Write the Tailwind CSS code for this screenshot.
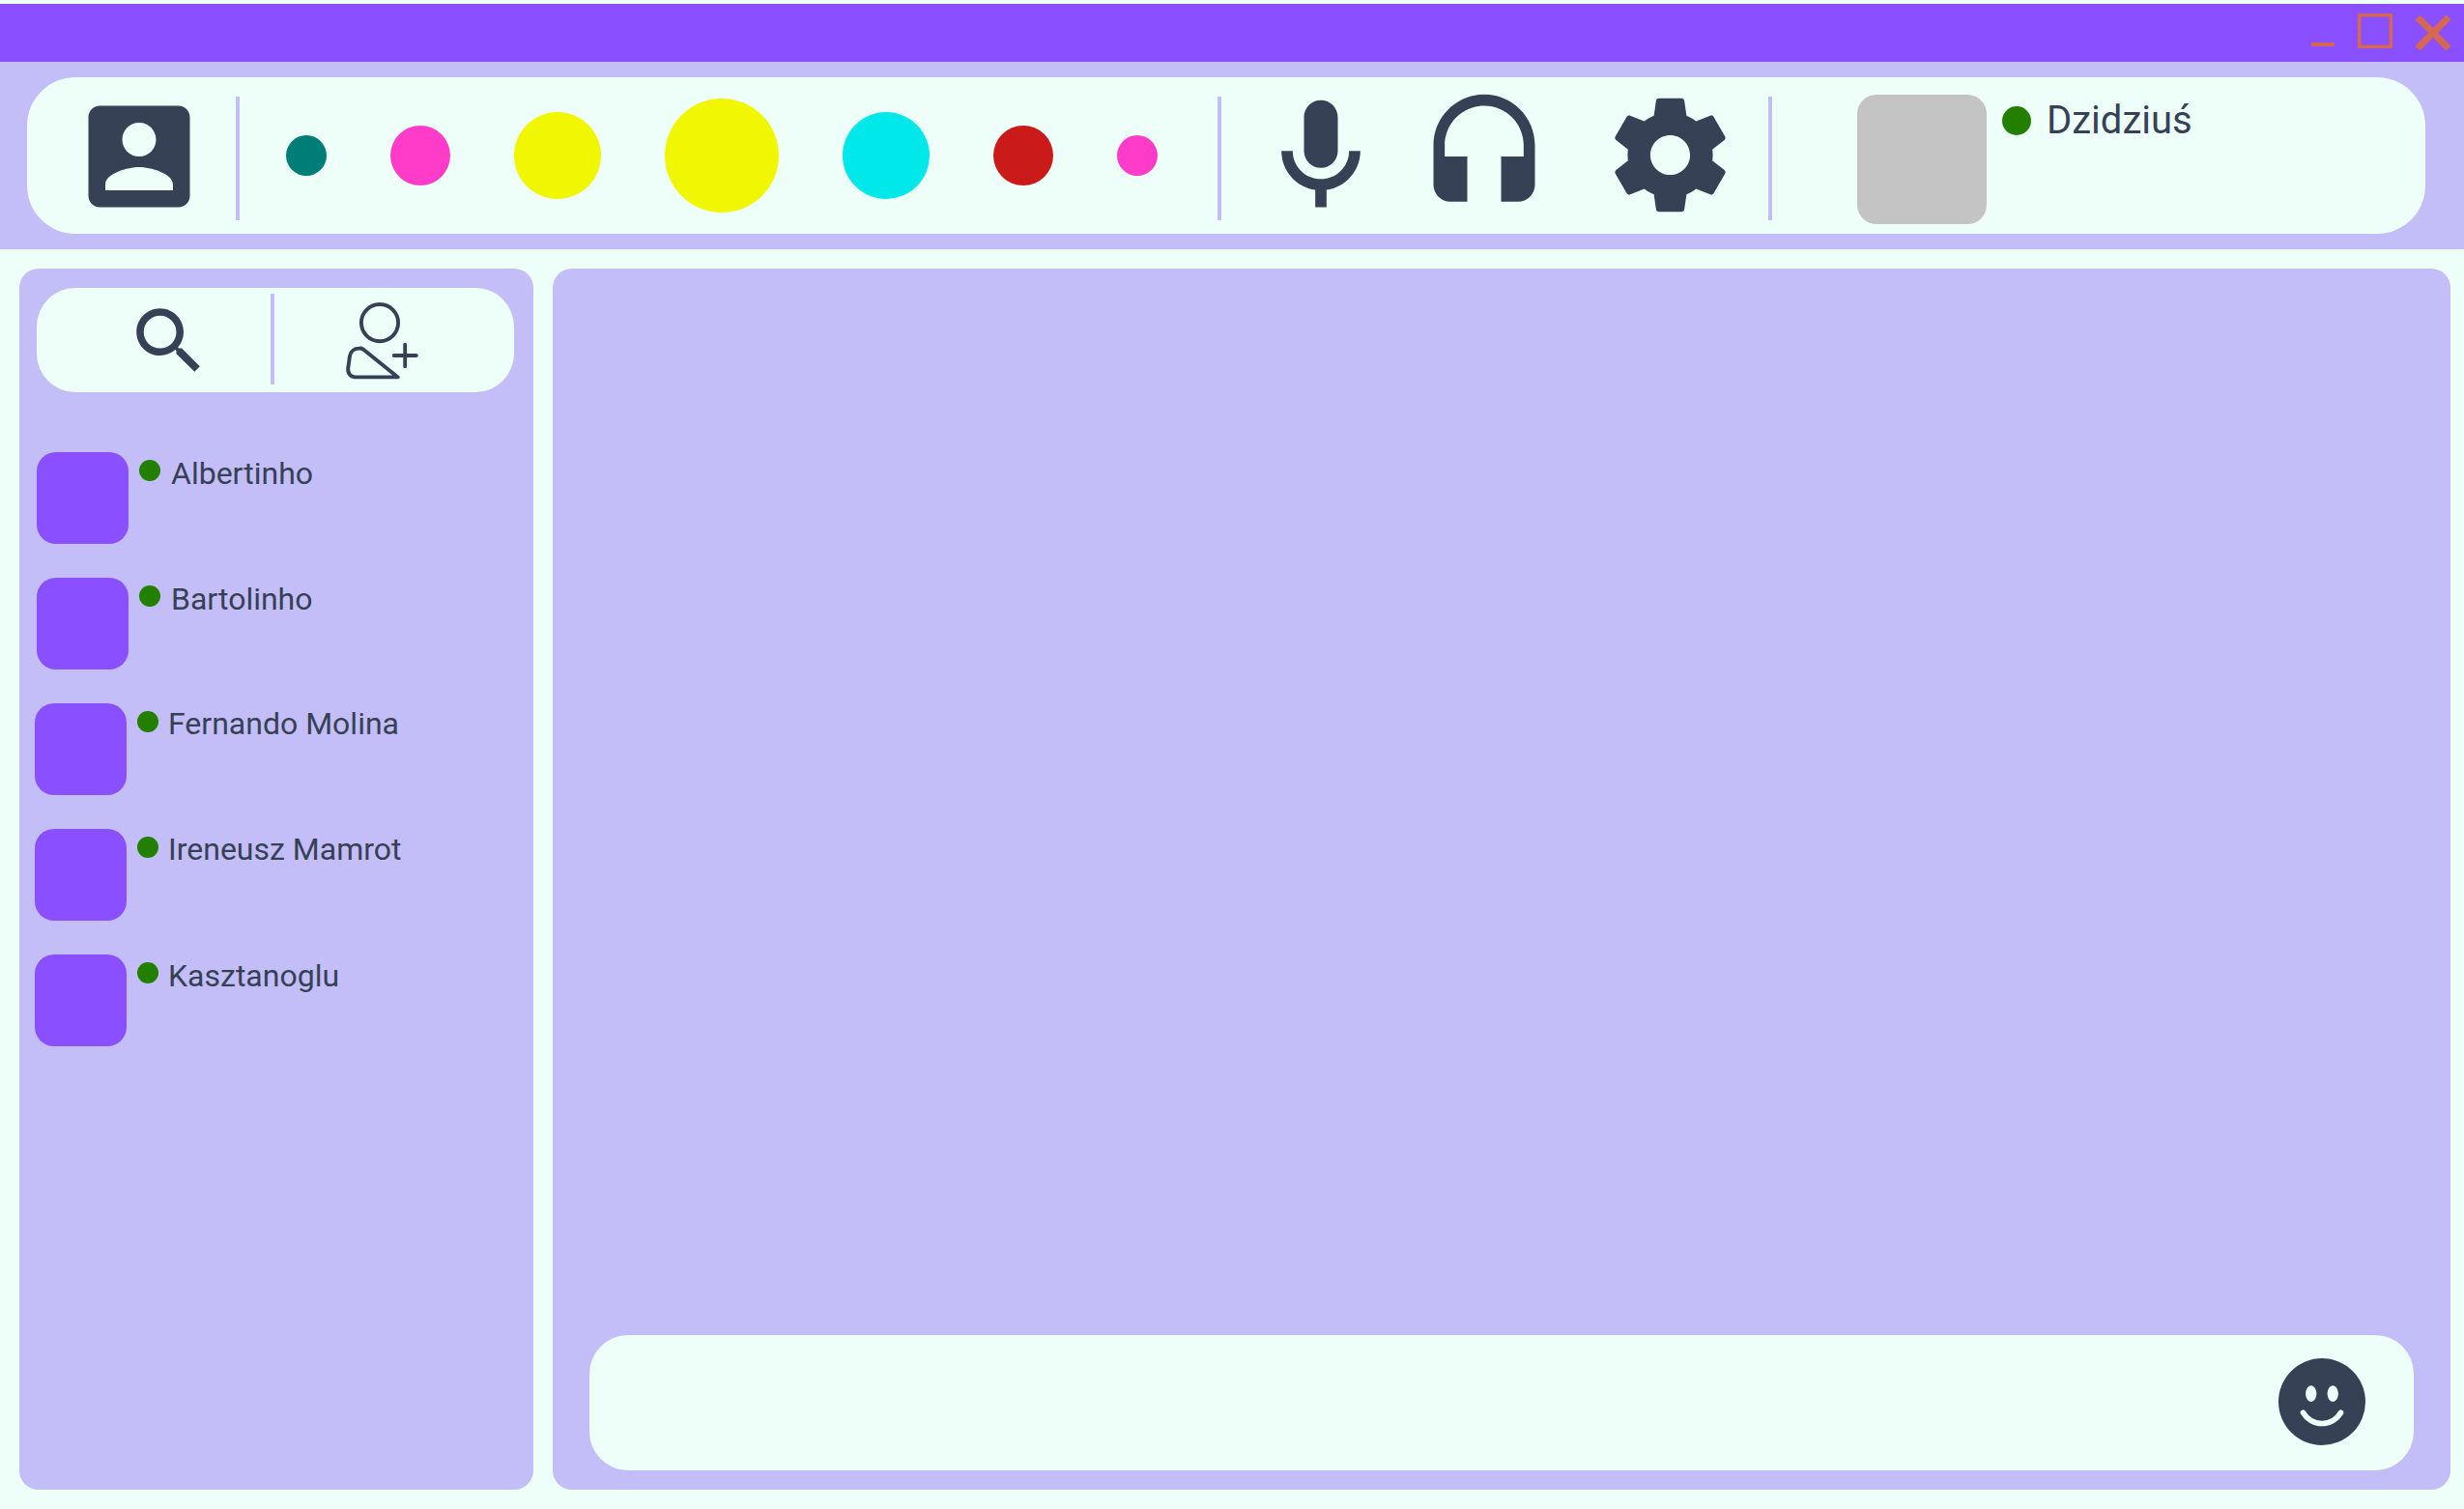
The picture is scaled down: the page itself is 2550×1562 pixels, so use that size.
<!DOCTYPE html>
<html lang="pl">
<head>
<meta charset="utf-8">
<title>Komunikator</title>
<script src="https://cdn.jsdelivr.net/npm/@tailwindcss/browser@4"></script>
</head>
<body class="flex h-[1562px] w-[2550px] flex-col overflow-hidden bg-[#eefffa] pt-1 font-['Roboto',sans-serif] text-[#364156]">
  <!-- title bar -->
  <div class="flex h-[60px] shrink-0 justify-end bg-[#8a4fff] text-[#d66853]">
    <svg class="h-[60px] w-[158px]" viewBox="2392 4 158 60" fill="none" stroke="currentColor">
      <path d="M2392 46h24" stroke-width="4"/>
      <rect x="2441.7" y="15.7" width="32.600" height="32.600" stroke-width="3.4"/>
      <path d="M2502 18l32 32M2534 18l-32 32" stroke-width="7"/>
    </svg>
  </div>

  <!-- top bar -->
  <header class="h-[194px] shrink-0 bg-[#c3bef7] pt-4 pr-10 pl-7">
    <div class="flex h-[162px] items-center rounded-[50px] bg-[#eefffa] pl-[46px]">
      <svg class="mt-0.5 size-[140px] shrink-0" viewBox="0 0 24 24" fill="currentColor"><path d="M3 5v14c0 1.1.89 2 2 2h14c1.1 0 2-.9 2-2V5c0-1.1-.9-2-2-2H5c-1.11 0-2 .9-2 2zm12 4c0 1.66-1.34 3-3 3s-3-1.34-3-3 1.34-3 3-3 3 1.34 3 3zm-9 8c0-2 4-3.1 6-3.1s6 1.1 6 3.1v1H6v-1z"/></svg>
      <div class="mt-1.5 ml-[30px] h-32 w-1 shrink-0 bg-[#c3bef7]"></div>
      <div class="ml-12 flex shrink-0 items-center gap-[66px]">
        <div class="size-[42px] rounded-full bg-[#007d77]"></div>
        <div class="size-[62px] rounded-full bg-[#ff3bca]"></div>
        <div class="size-[90px] rounded-full bg-[#f1f700]"></div>
        <div class="size-[118px] rounded-full bg-[#f1f700]"></div>
        <div class="size-[90px] rounded-full bg-[#00e8ea]"></div>
        <div class="size-[62px] rounded-full bg-[#cb1a1a]"></div>
        <div class="size-[42px] rounded-full bg-[#ff3bca]"></div>
      </div>
      <div class="mt-1.5 ml-[62px] h-32 w-1 shrink-0 bg-[#c3bef7]"></div>
      <svg class="mt-0.5 ml-[33px] size-[140px] shrink-0" viewBox="0 0 24 24" fill="currentColor"><path d="M12 14c1.66 0 3-1.34 3-3V5c0-1.66-1.34-3-3-3S9 3.34 9 5v6c0 1.66 1.34 3 3 3zm5-3c0 2.76-2.24 5-5 5s-5-2.24-5-5H5c0 3.53 2.61 6.43 6 6.92V21h2v-3.08c3.39-.49 6-3.39 6-6.92h-2z"/></svg>
      <svg class="mt-0.5 ml-[29px] size-[140px] shrink-0" viewBox="0 0 24 24" fill="currentColor"><path d="M12 1c-4.97 0-9 4.03-9 9v7c0 1.66 1.34 3 3 3h3v-8H5v-2c0-3.87 3.13-7 7-7s7 3.13 7 7v2h-4v8h3c1.66 0 3-1.34 3-3v-7c0-4.97-4.03-9-9-9z"/></svg>
      <svg class="mb-0.5 ml-[52px] size-[141px] shrink-0" viewBox="0 0 24 24" fill="currentColor"><path d="M19.43 12.98c.04-.32.07-.64.07-.98s-.03-.66-.07-.98l2.11-1.65c.19-.15.24-.42.12-.64l-2-3.46c-.12-.22-.39-.3-.61-.22l-2.49 1c-.52-.4-1.08-.73-1.69-.98l-.38-2.65C14.46 2.18 14.25 2 14 2h-4c-.25 0-.46.18-.49.42l-.38 2.65c-.61.25-1.17.59-1.69.98l-2.49-1c-.23-.09-.49 0-.61.22l-2 3.46c-.13.22-.07.49.12.64l2.11 1.65c-.04.32-.07.65-.07.98s.03.66.07.98l-2.11 1.65c-.19.15-.24.42-.12.64l2 3.46c.12.22.39.3.61.22l2.49-1c.52.4 1.08.73 1.69.98l.38 2.65c.03.24.24.42.49.42h4c.25 0 .46-.18.49-.42l.38-2.65c.61-.25 1.17-.59 1.69-.98l2.49 1c.23.09.49 0 .61-.22l2-3.46c.12-.22.07-.49-.12-.64l-2.11-1.65zM12 15.5c-1.93 0-3.5-1.57-3.5-3.5s1.57-3.5 3.5-3.5 3.5 1.57 3.5 3.5-1.57 3.5-3.5 3.5z"/></svg>
      <div class="mt-1.5 ml-[31px] h-32 w-1 shrink-0 bg-[#c3bef7]"></div>
      <div class="mt-2 ml-[88px] flex shrink-0 items-start">
        <div class="size-[134px] rounded-[20px] bg-[#c4c4c4]"></div>
        <div class="mt-3 ml-4 size-[30px] rounded-full bg-[#227f00]"></div>
        <span class="mt-[3px] ml-4 text-[40px] leading-[47px]">Dzidziuś</span>
      </div>
    </div>
  </header>

  <main class="mt-5 flex h-[1264px] shrink-0 gap-5 pr-3.5 pl-5">
    <!-- contacts -->
    <aside class="w-[532px] shrink-0 rounded-[20px] bg-[#c3bef7] pt-5">
      <div class="ml-[18px] flex h-[108px] w-[494px] items-start rounded-[40px] bg-[#eefffa]">
        <svg class="mt-2.5 ml-[92px] size-[90px]" viewBox="0 0 24 24" fill="currentColor"><path d="M15.5 14h-.79l-.28-.27C15.41 12.59 16 11.11 16 9.5 16 5.91 13.09 3 9.5 3S3 5.91 3 9.5 5.91 16 9.5 16c1.61 0 3.09-.59 4.23-1.57l.27.28v.79l5 4.99L20.49 19l-4.99-5zm-6 0C7.01 14 5 11.99 5 9.5S7.01 5 9.5 5 14 7.01 14 9.5 11.99 14 9.5 14z"/></svg>
        <div class="mt-1.5 ml-[60px] h-[94px] w-1 bg-[#c3bef7]"></div>
        <svg class="mt-2 ml-[66px] h-[94px] w-[90px]" viewBox="350 306 90 94" fill="none" stroke="currentColor" stroke-width="3.9" stroke-linecap="round" stroke-linejoin="round">
          <circle cx="393" cy="334.1" r="19.1"/>
          <path d="M419.2 356.700v22.600M407.8 368h23"/>
          <path d="M411.8 390.4H368C363 390.4 360 387 360.2 381.5L362 368.500C363 363 367.500 360.6 371.500 360.6C373.500 360.400 374.500 360.600 375.500 361.300Z"/>
        </svg>
      </div>

      <ul class="mt-[62px] flex flex-col gap-[35px] pl-4">
        <li class="ml-0.5 flex h-[95px] items-start"><div class="size-[95px] rounded-[20px] bg-[#8a4fff]"></div><div class="mt-2 ml-[11px] size-[22px] rounded-full bg-[#227f00]"></div><span class="mt-[3px] ml-[11px] text-[32px] leading-[38px]">Albertinho</span></li>
        <li class="ml-0.5 flex h-[95px] items-start"><div class="size-[95px] rounded-[20px] bg-[#8a4fff]"></div><div class="mt-2 ml-[11px] size-[22px] rounded-full bg-[#227f00]"></div><span class="mt-[3px] ml-[11px] text-[32px] leading-[38px]">Bartolinho</span></li>
        <li class="flex h-[95px] items-start"><div class="size-[95px] rounded-[20px] bg-[#8a4fff]"></div><div class="mt-2 ml-[11px] size-[22px] rounded-full bg-[#227f00]"></div><span class="mt-0.5 ml-2.5 text-[32px] leading-[38px]">Fernando Molina</span></li>
        <li class="flex h-[95px] items-start"><div class="size-[95px] rounded-[20px] bg-[#8a4fff]"></div><div class="mt-2 ml-[11px] size-[22px] rounded-full bg-[#227f00]"></div><span class="mt-0.5 ml-2.5 text-[32px] leading-[38px]">Ireneusz Mamrot</span></li>
        <li class="flex h-[95px] items-start"><div class="size-[95px] rounded-[20px] bg-[#8a4fff]"></div><div class="mt-2 ml-[11px] size-[22px] rounded-full bg-[#227f00]"></div><span class="mt-[3px] ml-2.5 text-[32px] leading-[38px]">Kasztanoglu</span></li>
      </ul>
    </aside>

    <!-- conversation -->
    <section class="flex grow flex-col justify-end rounded-[20px] bg-[#c3bef7] pr-[38px] pb-5 pl-[38px]">
      <div class="flex h-[140px] items-center justify-end rounded-[40px] bg-[#eefffa] pr-[50px]">
        <svg class="-mt-0.5 size-[90px]" viewBox="0 0 16 16" fill="currentColor"><path d="M8 16A8 8 0 1 0 8 0a8 8 0 0 0 0 16M7 6.500C7 7.328 6.552 8 6 8s-1-.672-1-1.500S5.448 5 6 5s1 .672 1 1.500M4.285 9.567a.5.5 0 0 1 .683.183A3.500 3.500 0 0 0 8 11.500a3.500 3.500 0 0 0 3.032-1.750.5.5 0 1 1 .866.5A4.500 4.500 0 0 1 8 12.500a4.500 4.500 0 0 1-3.898-2.250.5.5 0 0 1 .183-.683M10 8c-.552 0-1-.672-1-1.500S9.448 5 10 5s1 .672 1 1.500S10.552 8 10 8"/></svg>
      </div>
    </section>
  </main>
</body>
</html>
